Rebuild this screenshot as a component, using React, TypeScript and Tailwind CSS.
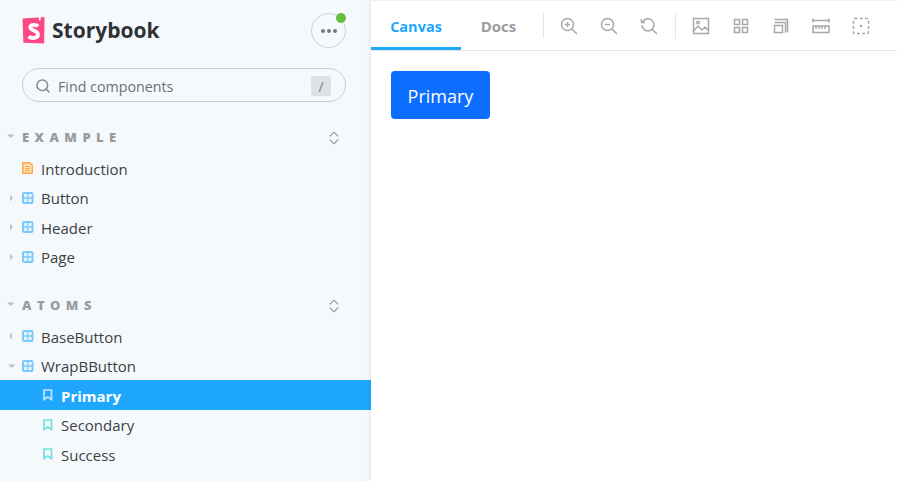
import { Search } from 'lucide-react';
import { FC, ReactNode } from 'react';

const font = '[font-family:"Open_Sans","Noto_Sans",sans-serif]';

const Caret: FC<{ open?: boolean }> = ({ open }) => (
  <svg width="8" height="8" viewBox="0 0 8 8" className="shrink-0">
    {open ? <path d="M0 2.5h7.500L3.750 6z" fill="#bcbfc2" /> : <path d="M2 .5v7L5 4z" fill="#c0c3c6" />}
  </svg>
);

const ComponentIcon = () => (
  <svg width="12" height="12" viewBox="0 0 12 12" className="shrink-0">
    <rect width="11.500" height="12" rx="2" fill="#7cc8fc" />
    <path d="M2 2h3.200v3.300H2zM6.400 2h3.200v3.300H6.400zM2 6.700h3.200V10H2zM6.400 6.700h3.200V10H6.400z" fill="#e3f3ff" />
  </svg>
);

const DocIcon = () => (
  <span className="flex w-3 shrink-0">
    <svg width="11" height="12" viewBox="0 0 11 12">
      <path d="M0 0h8l3 3v9H0z" fill="#fba848" />
      <path d="M1.500 1.500h6l2 2v7h-8z" fill="#ffe0b8" />
      <path d="M3 4.500h5M3 6.500h5M3 8.500h5" stroke="#fba848" strokeWidth="1" />
    </svg>
  </span>
);

const StoryIcon: FC<{ active?: boolean }> = ({ active }) => (
  <span className="mr-px flex shrink-0">
    <svg width="10" height="12" viewBox="0 0 10 12">
      <path
        d="M1 1h7.500v9.500L4.750 8 1 10.500z"
        fill="none"
        stroke={active ? '#bfe6ff' : '#6fe0dc'}
        strokeWidth="1.7"
      />
    </svg>
  </span>
);

const Logo = () => (
  <svg width="23" height="27" viewBox="0 0 23 27" className="shrink-0">
    <path d="M0.5 1.500 17 0.500l-.2 3 1.800.2.200-3.400L22.500 0l-.3 26.600L1.400 25.800z" fill="#ff4785" />
    <path
      d="M16 9.200C14.600 7.600 8.400 6.900 8.300 10.300c-.1 3.400 7.700 2.900 7.700 7.200 0 4-6.700 4.400-9.400 2"
      fill="none"
      stroke="#fff"
      strokeWidth="3.800"
    />
  </svg>
);

const Row: FC<{ indent: string; icon: ReactNode; label: string; caret?: ReactNode; active?: boolean }> = ({
  indent,
  icon,
  label,
  caret,
  active,
}) => (
  <div
    className={`flex items-center ${indent} ${
      active ? '-mt-[0.5px] h-[30px] bg-[#1ea7fd] font-bold text-white' : 'h-[29.5px] text-[#3a3f44]'
    }`}
  >
    {caret && <span className="-ml-[14px] mr-[6px] flex w-2">{caret}</span>}
    {icon}
    <span className="ml-[7px] pt-[2px] text-[15px] leading-none">{label}</span>
  </div>
);

const Section: FC<{ title: string; listGap: string; children: ReactNode }> = ({ title, listGap, children }) => (
  <div>
    <div className="flex h-[20px] items-center pl-[7px] pr-[32px]">
      <span className="-mt-[5px] flex">
        <Caret open />
      </span>
      <span className="ml-[7px] text-[13px] font-black tracking-[0.42em] text-[#999c9f]">{title}</span>
      <svg width="10" height="14" viewBox="0 0 10 14" className="ml-auto -mt-px" fill="none" stroke="#8a8d90" strokeWidth="1.100">
        <path d="M.8 5.300 5 1.200l4.200 4.100M.8 8.700 5 12.800l4.200-4.100" />
      </svg>
    </div>
    <div className={listGap}>{children}</div>
  </div>
);

const Sidebar = () => (
  <aside className="flex w-[371px] shrink-0 flex-col bg-[#f6f9fc]">
    <div className="flex items-center justify-between pl-[22px] pr-[25px] pt-[13px]">
      <div className="flex items-center gap-[7px]">
        <Logo />
        <span className="text-[21px] leading-none font-bold text-[#2e3236]">Storybook</span>
      </div>
      <div className="relative flex h-[35px] w-[35px] items-center justify-center rounded-full border border-[#cfd1d3]">
        <svg width="16" height="4" viewBox="0 0 16 4">
          <circle cx="2" cy="2" r="2" fill="#76797c" />
          <circle cx="8" cy="2" r="2" fill="#76797c" />
          <circle cx="14" cy="2" r="2" fill="#76797c" />
        </svg>
        <span className="absolute -right-px -top-px h-[10px] w-[10px] rounded-full bg-[#66bf3c]" />
      </div>
    </div>

    <div className="ml-[22px] mt-[20px] flex h-[34px] w-[324px] items-center rounded-full border border-[#cbced1] pl-[12px] pr-[14px] pt-[2px]">
      <Search size={16} strokeWidth={2.2} className="text-[#85888b]" />
      <span className="ml-[7px] pt-[2px] text-[14.25px] text-[#6c7074]">Find components</span>
      <span className="ml-auto flex h-[20px] w-[20px] items-center justify-center rounded-[2px] bg-[#dfe2e4] text-[14px] text-[#7c7f82]">
        /
      </span>
    </div>

    <div className="mt-[26px]">
      <Section title="EXAMPLE" listGap="mt-[5.5px]">
        <Row indent="pl-[22px]" icon={<DocIcon />} label="Introduction" />
        <Row indent="pl-[22px]" icon={<ComponentIcon />} label="Button" caret={<Caret />} />
        <Row indent="pl-[22px]" icon={<ComponentIcon />} label="Header" caret={<Caret />} />
        <Row indent="pl-[22px]" icon={<ComponentIcon />} label="Page" caret={<Caret />} />
      </Section>
      <div className="mt-[24.5px]">
        <Section title="ATOMS" listGap="mt-[5.5px]">
          <Row indent="pl-[22px]" icon={<ComponentIcon />} label="BaseButton" caret={<Caret />} />
          <Row indent="pl-[22px]" icon={<ComponentIcon />} label="WrapBButton" caret={<Caret open />} />
          <Row indent="pl-[43px]" icon={<StoryIcon active />} label="Primary" active />
          <Row indent="pl-[43px]" icon={<StoryIcon />} label="Secondary" />
          <Row indent="pl-[43px]" icon={<StoryIcon />} label="Success" />
        </Section>
      </div>
    </div>
  </aside>
);

const ToolIcon: FC<{ children: ReactNode }> = ({ children }) => (
  <span className="flex w-10 shrink-0 justify-center">
    <svg width="18" height="18" viewBox="0 0 18 18" fill="none" stroke="#a6a8aa" strokeWidth="1.500">
      {children}
    </svg>
  </span>
);

const Toolbar = () => (
  <div className="flex h-[51px] shrink-0 items-stretch border-t border-b border-t-[#eef1f4] border-b-[#e5e7e9] bg-white">
    <span className="flex w-[90px] items-center justify-center border-b-[3px] border-[#1ea7fd] pt-[5px] text-[14.5px] font-bold text-[#1ea7fd]">
      Canvas
    </span>
    <span className="flex w-[75px] items-center justify-center pb-[3px] pt-[5px] text-[15px] font-bold text-[#999c9f]">
      Docs
    </span>
    <span className="ml-[7px] mt-[12px] h-[25px] w-px bg-[#dfe1e3]" />
    <div className="ml-[5px] flex items-center pt-[1px]">
      <ToolIcon>
        <circle cx="7.500" cy="7.500" r="6" />
        <path d="M12 12l5 5M5 7.500h5M7.500 5v5" />
      </ToolIcon>
      <ToolIcon>
        <circle cx="7.500" cy="7.500" r="6" />
        <path d="M12 12l5 5M5 7.500h5" />
      </ToolIcon>
      <ToolIcon>
        <path d="M3 4.500A6 6 0 1 1 2 8M12 12l5 5M1.500 2v3.500H5" />
      </ToolIcon>
      <span className="ml-[6px] mr-[5px] h-[25px] w-px bg-[#e5e7e9]" />
      <ToolIcon>
        <rect x="1.500" y="1.500" width="15" height="15" />
        <circle cx="6" cy="5.500" r="1.300" />
        <path d="M1.500 14l4.500-5 4 4 3-3 3 3" />
      </ToolIcon>
      <ToolIcon>
        <path d="M2.500 2.500h5v5h-5zM10.500 2.500h5v5h-5zM2.500 10.500h5v5h-5zM10.500 10.500h5v5h-5z" />
      </ToolIcon>
      <ToolIcon>
        <path d="M2.500 8.500h8v7h-8zM2.500 5.500h11v10M2.500 2.500h13v13" />
      </ToolIcon>
      <ToolIcon>
        <path d="M1 3.500h16M1 1.500v4M17 1.500v4M1 9h16v6.500H1zM4 9v3M7 9v3M10 9v3M13 9v3" />
      </ToolIcon>
      <ToolIcon>
        <rect x="1.500" y="1.500" width="15" height="15" rx="1" strokeDasharray="3 2.200" />
        <circle cx="9" cy="9" r="0.600" fill="#a6a8aa" />
      </ToolIcon>
    </div>
  </div>
);

export default function App() {
  return (
    <div className={`flex h-[481px] w-[897px] overflow-hidden ${font}`}>
      <Sidebar />
      <main className="flex flex-1 flex-col bg-white shadow-[0_0_6px_rgba(0,0,0,0.1)]">
        <Toolbar />
        <div className="p-5">
          <button className="flex h-[48px] w-[99px] items-center justify-center rounded-[4px] bg-[#0d6efd] pt-[2px] text-[18px] text-white">
            Primary
          </button>
        </div>
      </main>
    </div>
  );
}
